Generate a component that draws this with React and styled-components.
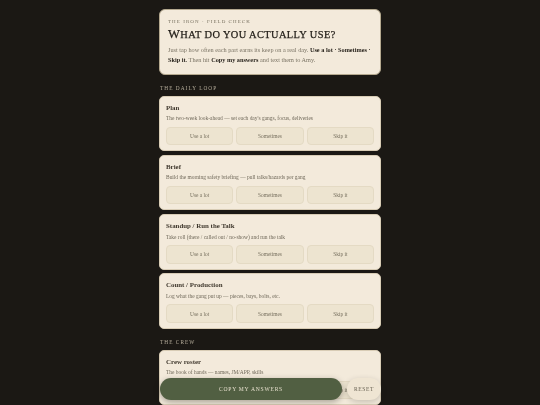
import React from "react";
import styled, { createGlobalStyle } from "styled-components";

const Global = createGlobalStyle`
  html, body { margin: 0; padding: 0; background: #1b1814; }
  body { font-family: "Liberation Serif", serif; height: 405px; overflow: hidden; }
`;

const Page = styled.main`
  width: 222px;
  margin: 0 auto;
  padding-top: 8.5px;
  display: flex;
  flex-direction: column;
  will-change: transform;
`;

const Hero = styled.header`
  background: #f3eadb;
  border: 1px solid #b5a98f;
  border-radius: 6px;
  box-sizing: border-box;
  height: 66px;
  padding: 8.5px 8px 0 8px;
`;

const Eyebrow = styled.div`
  font-size: 5px;
  line-height: 7px;
  letter-spacing: 1.05px;
  color: #77705f;
`;

const Title = styled.h1`
  margin: 2px 0 0;
  font-size: 10.4px;
  line-height: 15px;
  font-weight: 400;
  text-transform: uppercase;
  letter-spacing: 0.4px;
  color: #221e18;
  -webkit-text-stroke: 0.25px #221e18;
  white-space: nowrap;

  &::first-letter {
    font-size: 12.6px;
  }
`;

const Intro = styled.p`
  margin: 3px 0 0;
  font-size: 6.25px;
  line-height: 10px;
  color: #7b7465;
  white-space: nowrap;

  b {
    color: #2a251e;
  }
`;

const SectionLabel = styled.h2`
  margin: ${(p) => p.$top}px 0 3.5px 1px;
  font-size: 5.3px;
  line-height: 7px;
  font-weight: 400;
  letter-spacing: 1.05px;
  color: #b7ae9c;
`;

const List = styled.div`
  display: flex;
  flex-direction: column;
  gap: 3.8px;
`;

const Card = styled.article`
  background: #f3eadb;
  border-radius: 5px;
  box-sizing: border-box;
  border: 1px solid #d8ccb5;
  height: 55.5px;
  padding: 6px 6px 0;
`;

const CardTitle = styled.h3`
  margin: 0;
  font-size: 6.9px;
  line-height: 9px;
  font-weight: 700;
  color: #40392e;
`;

const CardText = styled.p`
  margin: 2.5px 0 0;
  font-size: 5.45px;
  line-height: 8px;
  color: #6f6859;
  white-space: nowrap;
`;

const Choices = styled.div`
  display: grid;
  grid-template-columns: repeat(3, 1fr);
  gap: 3px;
  margin-top: 4.5px;
`;

const Choice = styled.button`
  height: 18.5px;
  padding: 0;
  background: #ede4d0;
  border: 1px solid #e4dac4;
  border-radius: 4px;
  font-family: inherit;
  font-size: 5.4px;
  color: #77705f;
`;

const Dock = styled.div`
  position: fixed;
  left: 159.5px;
  top: 377.5px;
  width: 221px;
  display: flex;
  gap: 5px;
  will-change: transform;
`;

const CopyButton = styled.button`
  flex: 1;
  height: 21.5px;
  border: 0;
  border-radius: 11px;
  background: #515f42;
  box-shadow: 0 2px 6px rgba(27, 24, 20, 0.35);
  font-family: inherit;
  font-size: 5.6px;
  letter-spacing: 0.75px;
  color: #e6dfcd;
`;

const ResetButton = styled.button`
  width: 34px;
  height: 21.5px;
  padding: 0;
  border: 0;
  border-radius: 11px;
  background: #efe5d3;
  box-shadow: 0 2px 6px rgba(27, 24, 20, 0.2);
  font-family: inherit;
  font-size: 5.6px;
  letter-spacing: 0.6px;
  color: #6a6354;
`;

const daily = [
  ["Plan", "The two-week look-ahead — set each day's gangs, focus, deliveries"],
  ["Brief", "Build the morning safety briefing — pull talks/hazards per gang"],
  ["Standup / Run the Talk", "Take roll (there / called out / no-show) and run the talk"],
  ["Count / Production", "Log what the gang put up — pieces, bays, bolts, etc."],
];

const crew = [["Crew roster", "The book of hands — names, JM/APP, skills"]];

function Part({ title, text }) {
  return (
    <Card>
      <CardTitle>{title}</CardTitle>
      <CardText>{text}</CardText>
      <Choices>
        <Choice>Use a lot</Choice>
        <Choice>Sometimes</Choice>
        <Choice>Skip it</Choice>
      </Choices>
    </Card>
  );
}

export default function App() {
  return (
    <>
      <Global />
      <Page>
        <Hero>
          <Eyebrow>THE IRON · FIELD CHECK</Eyebrow>
          <Title>What do you actually use?</Title>
          <Intro>
            Just tap how often each part earns its keep on a real day. <b>Use a lot · Sometimes ·</b>
            <br />
            <b>Skip it.</b> Then hit <b>Copy my answers</b> and text them to Amy.
          </Intro>
        </Hero>
        <SectionLabel $top={10.5}>THE DAILY LOOP</SectionLabel>
        <List>
          {daily.map(([title, text]) => (
            <Part key={title} title={title} text={text} />
          ))}
        </List>
        <SectionLabel $top={10.5}>THE CREW</SectionLabel>
        <List>
          {crew.map(([title, text]) => (
            <Part key={title} title={title} text={text} />
          ))}
        </List>
      </Page>
      <Dock>
        <CopyButton>COPY MY ANSWERS</CopyButton>
        <ResetButton>RESET</ResetButton>
      </Dock>
    </>
  );
}
